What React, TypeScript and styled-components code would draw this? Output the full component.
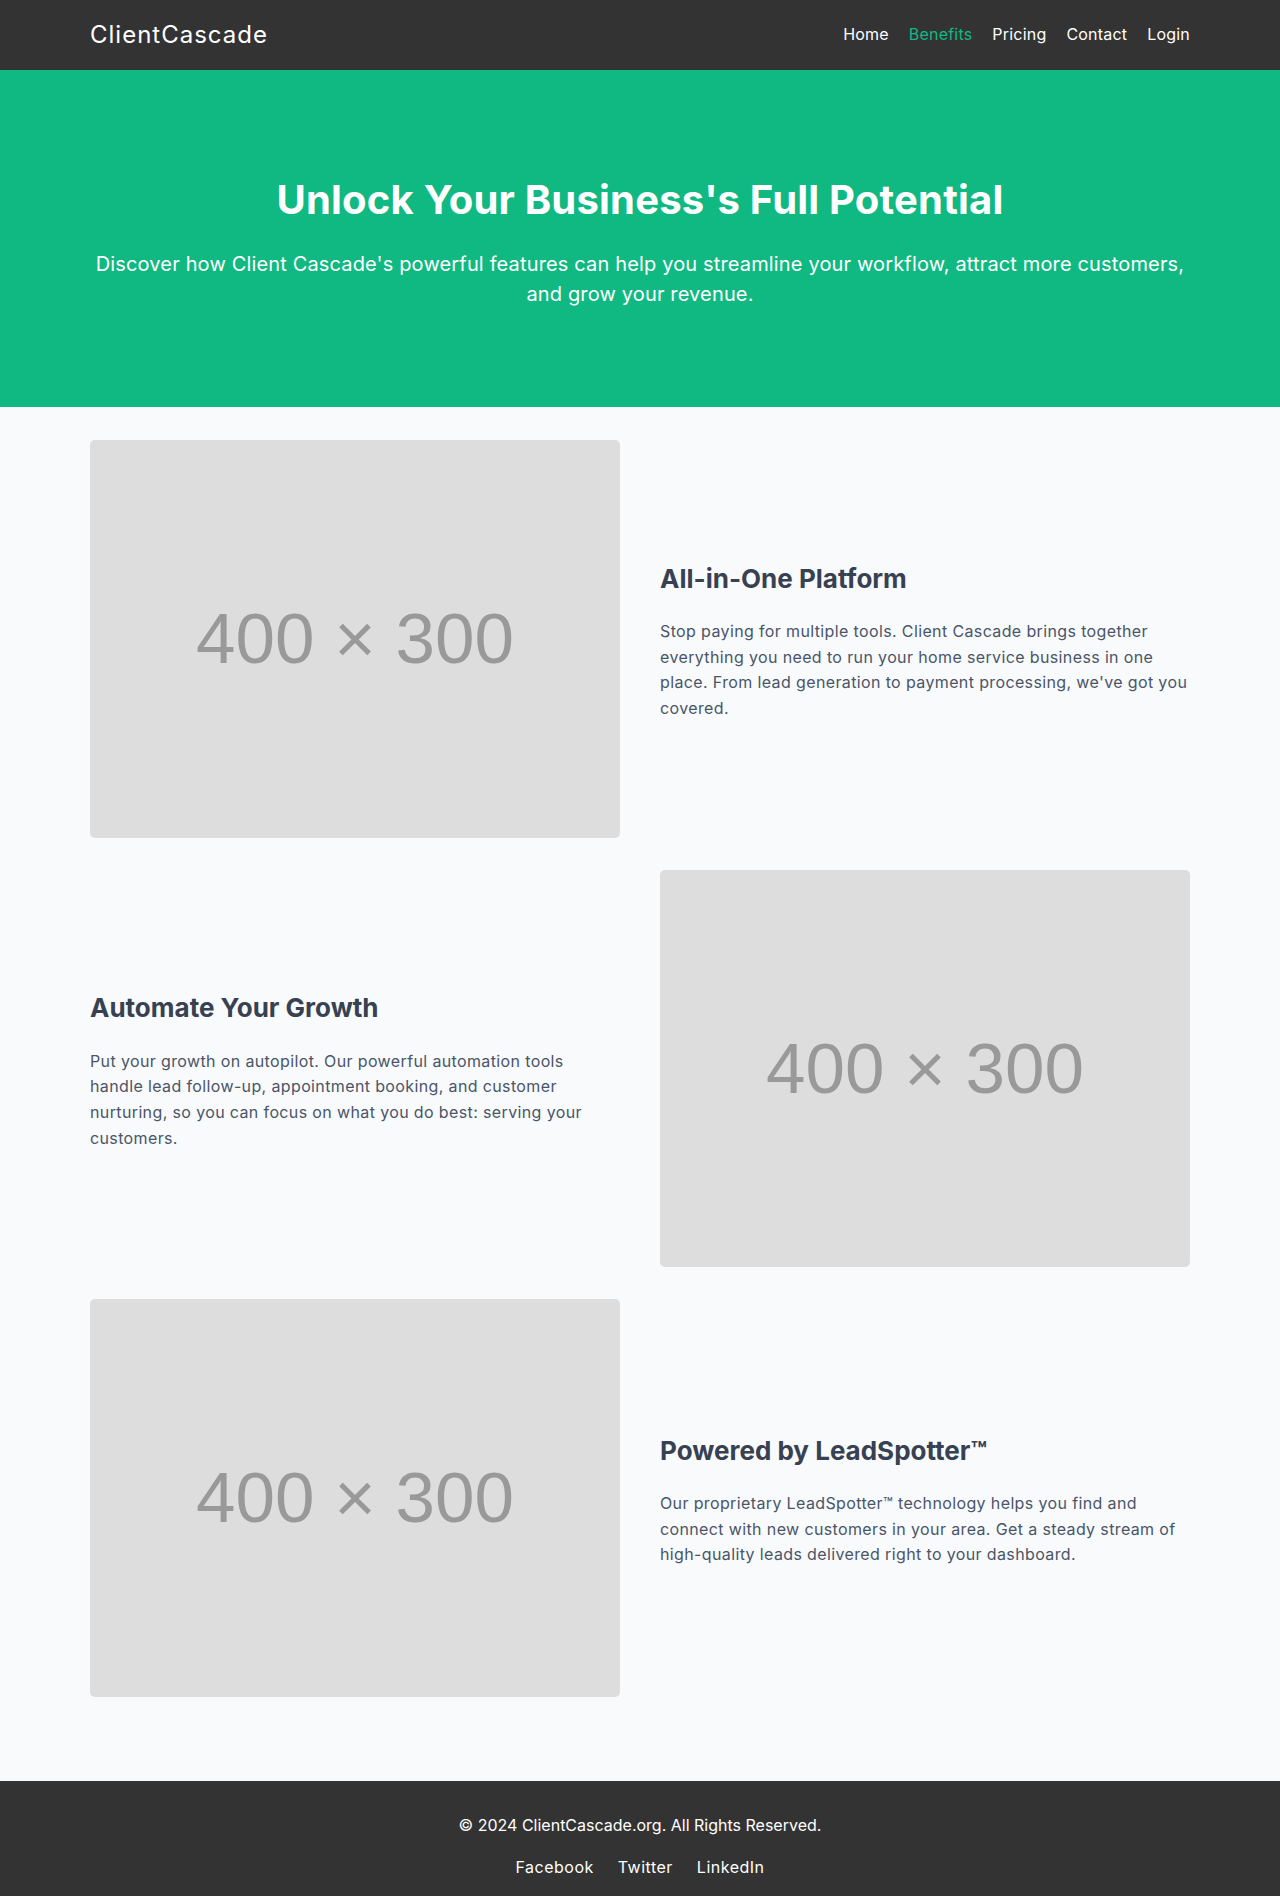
import React from "react";
import styled, { createGlobalStyle } from "styled-components";

const GlobalStyle = createGlobalStyle`
  *, *::before, *::after { box-sizing: border-box; }
  html, body { margin: 0; padding: 0; }
  body {
    font-family: Inter, "Open Sans", Arial, sans-serif;
    background: #f8fafc;
    color: #4a5568;
    -webkit-font-smoothing: antialiased;
  }
  a { text-decoration: none; }
`;

const Container = styled.div`
  max-width: 1100px;
  margin: 0 auto;
`;

const Header = styled.header`
  background: #333333;
  height: 70px;
`;

const NavBar = styled(Container)`
  height: 100%;
  display: flex;
  align-items: center;
  justify-content: space-between;
`;

const Logo = styled.a`
  color: #ffffff;
  font-size: 24px;
  letter-spacing: 1px;
  line-height: 1;
  font-weight: 400;
`;

const NavLinks = styled.nav`
  display: flex;
  align-items: center;
  gap: 20px;
  margin-top: -2px;
`;

const NavLink = styled.a<{ $active?: boolean }>`
  color: ${(p) => (p.$active ? "#10b981" : "#ffffff")};
  font-size: 16px;
  letter-spacing: 0.2px;
  line-height: 24px;
`;

const Hero = styled.section`
  background: #10b981;
  color: #ffffff;
  text-align: center;
  padding: 106px 0 98px;
`;

const HeroTitle = styled.h1`
  margin: 0 0 25px;
  font-size: 40px;
  font-weight: 700;
  line-height: 48px;
  letter-spacing: 0.2px;
`;

const HeroText = styled.p`
  margin: 0;
  font-size: 20px;
  line-height: 30px;
  letter-spacing: 0.15px;
`;

const Features = styled.section`
  background: #f8fafc;
  padding: 33px 0 84px;
`;

const FeatureList = styled(Container)`
  display: flex;
  flex-direction: column;
  gap: 32px;
`;

const FeatureRow = styled.div`
  display: grid;
  grid-template-columns: 1fr 1fr;
  gap: 40px;
  align-items: center;
`;

const Placeholder = styled.div`
  aspect-ratio: 4 / 3;
  background: #dddddd;
  border-radius: 5px;
  display: flex;
  align-items: center;
  justify-content: center;
  color: #999999;
  font-family: "Liberation Sans", Arial, sans-serif;
  font-size: 71px;
  line-height: 1;
`;

const FeatureText = styled.div`
  padding-top: 5px;
`;

const FeatureTitle = styled.h3`
  margin: 0 0 22px;
  font-size: 26px;
  font-weight: 700;
  line-height: 1.4;
  color: #374151;
`;

const FeatureBody = styled.p`
  margin: 0;
  font-size: 16px;
  line-height: 1.6;
  letter-spacing: 0.37px;
  color: #4a5568;
`;

const Footer = styled.footer`
  background: #333333;
  color: #ffffff;
  text-align: center;
  padding: 32px 0;
`;

const Copyright = styled.p`
  margin: 0 0 18px;
  font-size: 16px;
  line-height: 24px;
`;

const FooterLinks = styled.div`
  display: flex;
  justify-content: center;
  gap: 24px;
`;

const FooterLink = styled.a`
  color: #ffffff;
  font-size: 16px;
  line-height: 24px;
  letter-spacing: 0.5px;
`;

type Feature = { title: string; body: string };

const features: Feature[] = [
  {
    title: "All-in-One Platform",
    body:
      "Stop paying for multiple tools. Client Cascade brings together everything you need to run your home service business in one place. From lead generation to payment processing, we've got you covered.",
  },
  {
    title: "Automate Your Growth",
    body:
      "Put your growth on autopilot. Our powerful automation tools handle lead follow-up, appointment booking, and customer nurturing, so you can focus on what you do best: serving your customers.",
  },
  {
    title: "Powered by LeadSpotter™",
    body:
      "Our proprietary LeadSpotter™ technology helps you find and connect with new customers in your area. Get a steady stream of high-quality leads delivered right to your dashboard.",
  },
];

const navItems = ["Home", "Benefits", "Pricing", "Contact", "Login"];

export default function App() {
  return (
    <>
      <GlobalStyle />
      <Header>
        <NavBar>
          <Logo href="#">ClientCascade</Logo>
          <NavLinks>
            {navItems.map((item) => (
              <NavLink key={item} href="#" $active={item === "Benefits"}>
                {item}
              </NavLink>
            ))}
          </NavLinks>
        </NavBar>
      </Header>

      <Hero>
        <Container>
          <HeroTitle>Unlock Your Business's Full Potential</HeroTitle>
          <HeroText>
            Discover how Client Cascade's powerful features can help you streamline your workflow, attract more
            customers, and grow your revenue.
          </HeroText>
        </Container>
      </Hero>

      <Features>
        <FeatureList>
          {features.map((f, i) => {
            const image = <Placeholder key="img">400 × 300</Placeholder>;
            const text = (
              <FeatureText key="text">
                <FeatureTitle>{f.title}</FeatureTitle>
                <FeatureBody>{f.body}</FeatureBody>
              </FeatureText>
            );
            return <FeatureRow key={f.title}>{i % 2 === 0 ? [image, text] : [text, image]}</FeatureRow>;
          })}
        </FeatureList>
      </Features>

      <Footer>
        <Copyright>© 2024 ClientCascade.org. All Rights Reserved.</Copyright>
        <FooterLinks>
          <FooterLink href="#">Facebook</FooterLink>
          <FooterLink href="#">Twitter</FooterLink>
          <FooterLink href="#">LinkedIn</FooterLink>
        </FooterLinks>
      </Footer>
    </>
  );
}
